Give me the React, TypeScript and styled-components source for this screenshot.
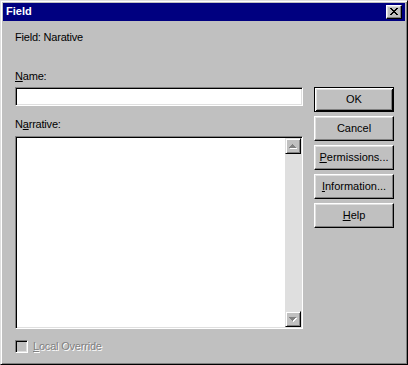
import React from "react";
import styled, { createGlobalStyle } from "styled-components";

const GlobalStyle = createGlobalStyle`
  html, body { margin: 0; padding: 0; background: #c0c0c0; }
  body { font-family: "Liberation Sans", Arial, sans-serif; }
`;

const Window = styled.div`
  box-sizing: border-box;
  width: 408px;
  height: 365px;
  background: #c0c0c0;
  border: 1px solid;
  border-color: #dfdfdf #000 #000 #dfdfdf;
  box-shadow: inset 1px 1px #fff, inset -1px -1px #808080;
  padding: 2px;
  display: flex;
  flex-direction: column;
  font-family: "Liberation Sans", Arial, sans-serif;
  font-size: 11px;
  letter-spacing: -0.2px;
  color: #000;
`;

const TitleBar = styled.div`
  height: 18px;
  flex: none;
  background: #000080;
  display: flex;
  align-items: center;
  justify-content: space-between;
  padding: 0 3px 0 3px;
`;

const Title = styled.span`
  color: #fff;
  font-weight: bold;
  font-size: 11px;
  letter-spacing: 0;
  line-height: 13px;
  margin-top: -1px;
`;

const CloseButton = styled.button`
  box-sizing: border-box;
  width: 16px;
  height: 14px;
  margin: 0;
  padding: 2px 0 0 3px;
  background: #c0c0c0;
  border: 1px solid;
  border-color: #fff #000 #000 #fff;
  box-shadow: inset -1px -1px #808080, inset 1px 1px #dfdfdf;
  display: flex;
  align-items: flex-start;
  justify-content: flex-start;
  svg { display: block; }
`;

const Body = styled.div`
  flex: 1;
  display: flex;
  flex-direction: column;
  padding: 10px 10px 0 12px;
`;

const Caption = styled.div`
  line-height: 13px;
  height: 13px;
`;

const Main = styled.div`
  display: flex;
  align-items: flex-start;
  gap: 11px;
`;

const LeftCol = styled.div`
  width: 288px;
  display: flex;
  flex-direction: column;
`;

const Label = styled.div<{ $mt: number }>`
  margin-top: ${(p) => p.$mt}px;
  line-height: 13px;
  height: 13px;
  u { text-decoration: underline; text-underline-offset: 1px; }
`;

const sunken = `
  border: 1px solid;
  border-color: #808080 #fff #fff #808080;
  box-shadow: inset 1px 1px #000, inset -1px -1px #dfdfdf;
`;

const TextInput = styled.input`
  box-sizing: border-box;
  width: 288px;
  height: 19px;
  margin: 4px 0 0 0;
  padding: 1px 3px;
  background: #fff;
  ${sunken}
  outline: none;
  font: inherit;
`;

const MemoField = styled.div`
  box-sizing: border-box;
  width: 288px;
  height: 193px;
  margin-top: 5px;
  padding: 1px;
  background: #fff;
  ${sunken}
  display: flex;
`;

const MemoText = styled.textarea`
  flex: 1;
  margin: 0;
  border: none;
  padding: 2px 3px;
  resize: none;
  outline: none;
  overflow: hidden;
  background: #fff;
  font: inherit;
`;

const ScrollBar = styled.div`
  width: 16px;
  flex: none;
  display: flex;
  flex-direction: column;
  background: #dfdfdf;
`;

const ScrollButton = styled.div`
  box-sizing: border-box;
  width: 16px;
  height: 16px;
  flex: none;
  background: #c0c0c0;
  border: 1px solid;
  border-color: #dfdfdf #000 #000 #dfdfdf;
  box-shadow: inset 1px 1px #fff, inset -1px -1px #808080;
  display: flex;
  align-items: center;
  justify-content: center;
  svg { display: block; }
`;

const ScrollTrack = styled.div`
  flex: 1;
`;

const CheckRow = styled.label`
  margin-top: 11px;
  display: flex;
  align-items: flex-start;
  gap: 5px;
  height: 13px;
  line-height: 13px;
  color: #808080;
  text-shadow: 1px 1px 0 #fff;
  u { text-decoration: underline; text-underline-offset: 1px; }
`;

const CheckBox = styled.span`
  box-sizing: border-box;
  width: 13px;
  height: 13px;
  flex: none;
  background: #c0c0c0;
  ${sunken}
`;

const RightCol = styled.div`
  margin-top: 43px;
  width: 80px;
  display: flex;
  flex-direction: column;
  gap: 4px;
`;

const Button = styled.button<{ $default?: boolean }>`
  box-sizing: border-box;
  width: 80px;
  height: 25px;
  margin: 0;
  padding: 0;
  background: #c0c0c0;
  font: inherit;
  color: #000;
  line-height: 13px;
  display: flex;
  align-items: center;
  justify-content: center;
  border: 1px solid;
  border-color: ${(p) => (p.$default ? "#000" : "#fff #000 #000 #fff")};
  box-shadow: ${(p) =>
    p.$default
      ? "inset 1px 1px #fff, inset -1px -1px #000, inset 2px 2px #dfdfdf, inset -2px -2px #808080"
      : "inset -1px -1px #808080, inset 1px 1px #dfdfdf"};
  u { text-decoration: underline; text-underline-offset: 1px; }
`;

const CloseGlyph = () => (
  <svg width="8" height="7" viewBox="0 0 8 7" shapeRendering="crispEdges">
    <path
      fill="#000"
      d="M0 0h2v1H0zM6 0h2v1H6zM1 1h2v1H1zM5 1h2v1H5zM2 2h4v1H2zM3 3h2v1H3zM2 4h4v1H2zM1 5h2v1H1zM5 5h2v1H5zM0 6h2v1H0zM6 6h2v1H6z"
    />
  </svg>
);

const Arrow = ({ up }: { up: boolean }) => (
  <svg width="8" height="5" viewBox="0 0 8 5" shapeRendering="crispEdges">
    {up ? (
      <>
        <path fill="#fff" d="M4 1h1v1H4zM3 2h3v1H3zM2 3h5v1H2zM1 4h7v1H1z" />
        <path fill="#808080" d="M3 0h1v1H3zM2 1h3v1H2zM1 2h5v1H1zM0 3h7v1H0z" />
      </>
    ) : (
      <>
        <path fill="#fff" d="M1 1h7v1H1zM2 2h5v1H2zM3 3h3v1H3zM4 4h1v1H4z" />
        <path fill="#808080" d="M0 0h7v1H0zM1 1h5v1H1zM2 2h3v1H2zM3 3h1v1H3z" />
      </>
    )}
  </svg>
);

export default function App() {
  return (
    <>
      <GlobalStyle />
      <Window>
        <TitleBar>
          <Title>Field</Title>
          <CloseButton aria-label="Close">
            <CloseGlyph />
          </CloseButton>
        </TitleBar>
        <Body>
          <Caption>Field: Narative</Caption>
          <Main>
            <LeftCol>
              <Label $mt={26}>
                <u>N</u>ame:
              </Label>
              <TextInput type="text" />
              <Label $mt={12}>
                N<u>a</u>rrative:
              </Label>
              <MemoField>
                <MemoText />
                <ScrollBar>
                  <ScrollButton>
                    <Arrow up />
                  </ScrollButton>
                  <ScrollTrack />
                  <ScrollButton>
                    <Arrow up={false} />
                  </ScrollButton>
                </ScrollBar>
              </MemoField>
              <CheckRow>
                <CheckBox />
                <span>
                  <u>L</u>ocal Override
                </span>
              </CheckRow>
            </LeftCol>
            <RightCol>
              <Button $default>OK</Button>
              <Button>Cancel</Button>
              <Button>
                <u>P</u>ermissions...
              </Button>
              <Button>
                <u>I</u>nformation...
              </Button>
              <Button>
                <u>H</u>elp
              </Button>
            </RightCol>
          </Main>
        </Body>
      </Window>
    </>
  );
}
